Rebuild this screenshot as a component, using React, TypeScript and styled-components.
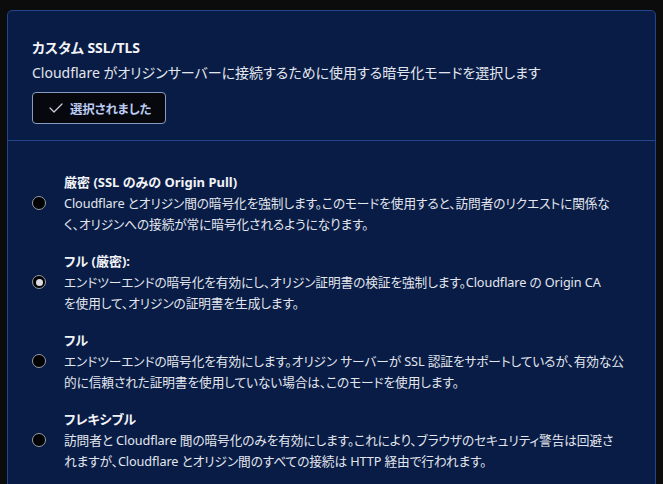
import styled, {createGlobalStyle} from 'styled-components';

const GlobalStyle = createGlobalStyle`
  html, body {
    margin: 0;
    padding: 0;
    background: #0c0c0c;
  }
  body {
    font-family: "Noto Sans", "Noto Sans CJK JP", sans-serif;
    font-feature-settings: "palt";
    color: #e8eaf0;
  }
`;

const modes = [
  {
    id: 'strict',
    title: '厳密 (SSL のみの Origin Pull)',
    lines: [
      'Cloudflare とオリジン間の暗号化を強制します。このモードを使用すると、訪問者のリクエストに関係な',
      'く、オリジンへの接続が常に暗号化されるようになります。',
    ],
  },
  {
    id: 'full-strict',
    title: 'フル (厳密):',
    lines: [
      'エンドツーエンドの暗号化を有効にし、オリジン証明書の検証を強制します。Cloudflare の Origin CA',
      'を使用して、オリジンの証明書を生成します。',
    ],
  },
  {
    id: 'full',
    title: 'フル',
    lines: [
      'エンドツーエンドの暗号化を有効にします。オリジン サーバーが SSL 認証をサポートしているが、有効な公',
      '的に信頼された証明書を使用していない場合は、このモードを使用します。',
    ],
  },
  {
    id: 'flexible',
    title: 'フレキシブル',
    lines: [
      '訪問者と Cloudflare 間の暗号化のみを有効にします。これにより、ブラウザのセキュリティ警告は回避さ',
      'れますが、Cloudflare とオリジン間のすべての接続は HTTP 経由で行われます。',
    ],
  },
];

const Page = styled.div`
  padding: 10px 7px 0 7px;
  height: 484px;
  box-sizing: border-box;
  overflow: hidden;
`;

const Card = styled.section`
  background: #081c45;
  border: 1px solid #23458c;
  border-radius: 5px;
  min-height: 520px;
`;

const Header = styled.div`
  padding: 27px 24px 16px 24px;
  border-bottom: 1px solid #23458c;
`;

const Title = styled.h2`
  margin: 0;
  font-size: 14px;
  font-weight: 700;
  line-height: 20px;
  color: #f2f3f7;
`;

const Description = styled.p`
  margin: 5px 0 0 0;
  font-size: 14px;
  line-height: 20px;
  color: #e3e6ee;
`;

const SelectedButton = styled.button`
  margin-top: 9px;
  display: inline-flex;
  align-items: center;
  gap: 7px;
  height: 32px;
  width: 134px;
  padding: 0 0 0 16px;
  box-sizing: border-box;
  background: #06080d;
  border: 1px solid #8a9cc4;
  border-radius: 4px;
  color: #bccbf3;
  font-family: inherit;
  font-feature-settings: "palt";
  font-size: 12.5px;
  letter-spacing: -0.2px;
  font-weight: 700;
  cursor: pointer;
`;

const Options = styled.div`
  display: flex;
  flex-direction: column;
  gap: 16px;
  padding: 31px 24px 24px 24px;
`;

const Option = styled.label`
  display: grid;
  grid-template-columns: 14px 1fr;
  column-gap: 18px;
  cursor: pointer;
`;

const OptionTitle = styled.div`
  grid-column: 2;
  font-size: 13px;
  font-weight: 700;
  line-height: 21px;
  color: #f2f3f7;
`;

const Radio = styled.span<{$checked?: boolean}>`
  grid-column: 1;
  grid-row: 2;
  margin-top: 3px;
  width: 14px;
  height: 14px;
  box-sizing: border-box;
  border-radius: 50%;
  border: 1px solid #9a9ca4;
  background: #000;
  display: flex;
  align-items: center;
  justify-content: center;

  &::after {
    content: '';
    display: ${(p) => (p.$checked ? 'block' : 'none')};
    width: 7px;
    height: 7px;
    border-radius: 50%;
    background: #dcdde2;
  }
`;

const OptionText = styled.div`
  grid-column: 2;
  grid-row: 2;
  font-size: 12.7px;
  letter-spacing: -0.1px;
  line-height: 21px;
  color: #e3e6ee;
  white-space: nowrap;
`;

const CheckIcon = () => (
  <svg width="14" height="10" viewBox="0 0 14 10" fill="none">
    <path d="M1 5 L5 9 L13 1" stroke="#c9d0de" strokeWidth="1.2" strokeLinecap="round" strokeLinejoin="round" />
  </svg>
);

const App = () => {
  const selected = 'full-strict';

  return (
    <Page>
      <GlobalStyle />
      <Card>
        <Header>
          <Title>カスタム SSL/TLS</Title>
          <Description>Cloudflare がオリジンサーバーに接続するために使用する暗号化モードを選択します</Description>
          <SelectedButton>
            <CheckIcon />
            選択されました
          </SelectedButton>
        </Header>
        <Options>
          {modes.map((m) => (
            <Option key={m.id}>
              <OptionTitle>{m.title}</OptionTitle>
              <Radio $checked={m.id === selected} />
              <OptionText>
                {m.lines.map((l, i) => (
                  <div key={i}>{l}</div>
                ))}
              </OptionText>
            </Option>
          ))}
        </Options>
      </Card>
    </Page>
  );
};

export default App;
